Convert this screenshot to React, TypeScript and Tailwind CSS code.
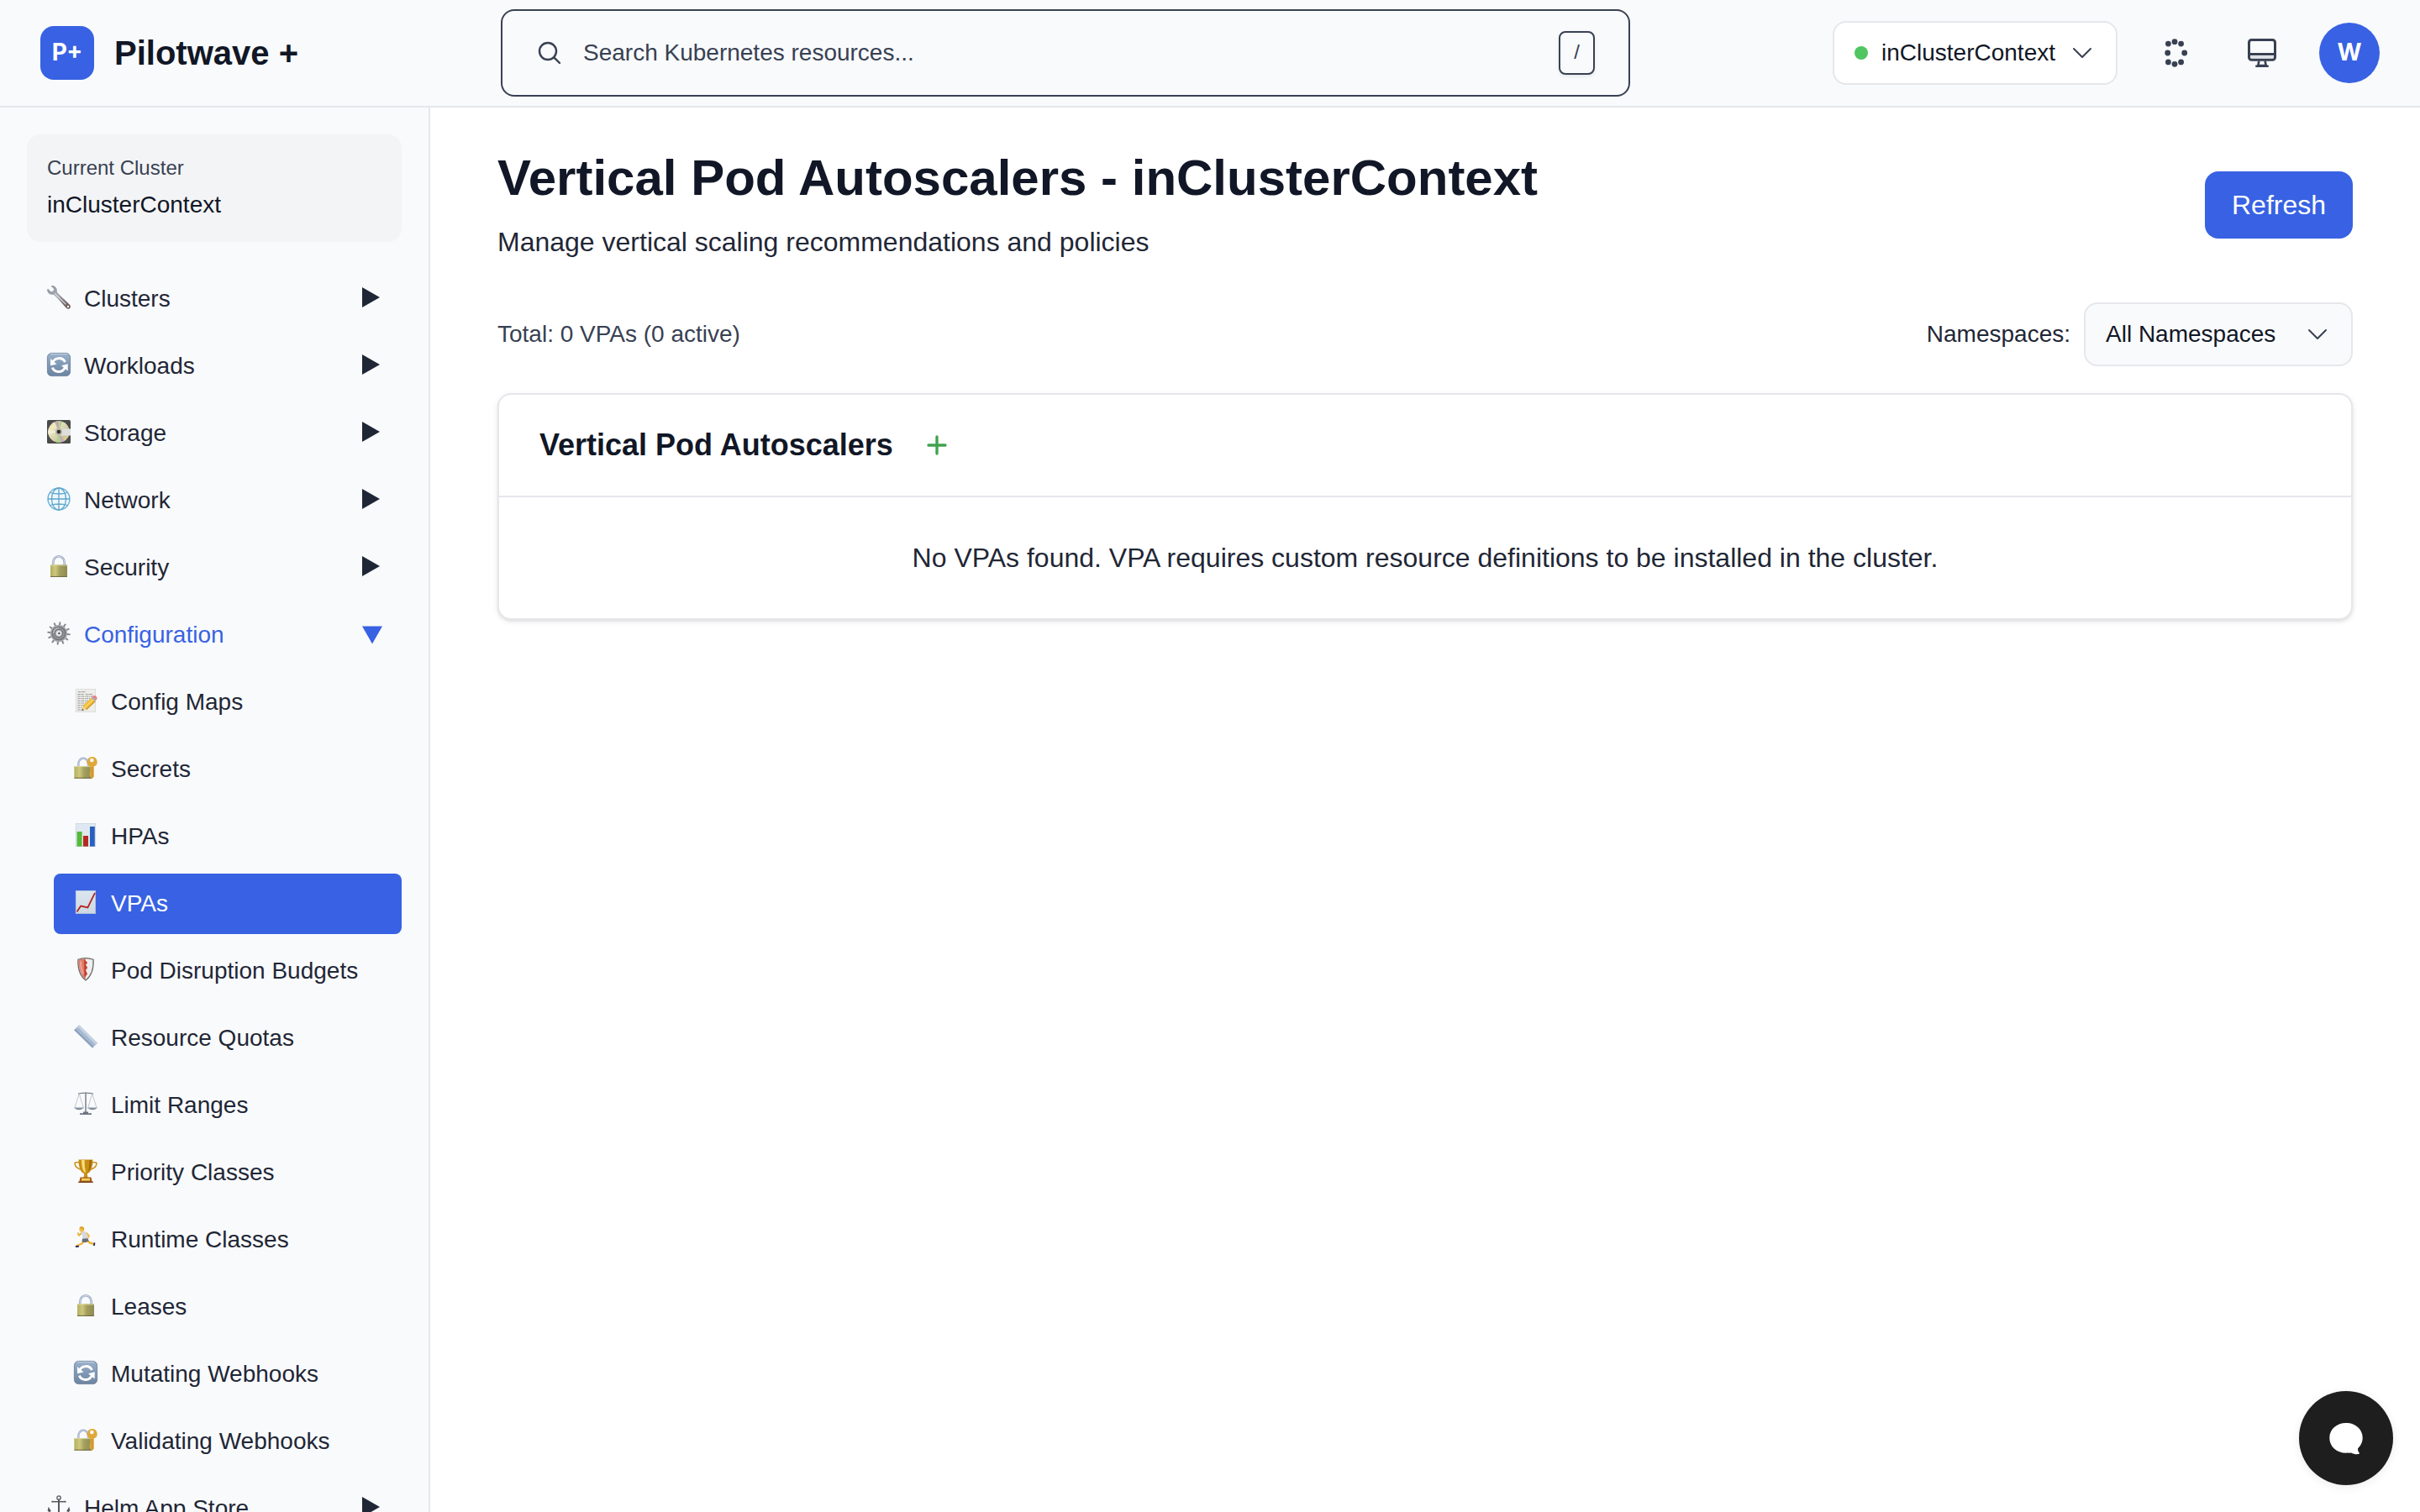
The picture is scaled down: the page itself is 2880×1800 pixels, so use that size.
import type { ReactNode } from "react";

const Svg = ({ children }: { children: ReactNode }) => (
  <svg viewBox="0 0 28 28" className="-mt-1 size-7 shrink-0 overflow-visible">
    {children}
  </svg>
);

const Wrench = () => (
  <Svg>
    <defs>
      <linearGradient id="wr" x1="0" y1="0" x2="1" y2="1">
        <stop offset="0" stopColor="#8f959e" />
        <stop offset=".45" stopColor="#a4a9b2" />
        <stop offset=".75" stopColor="#75696a" />
        <stop offset="1" stopColor="#6f5a55" />
      </linearGradient>
    </defs>
    <path
      d="M4.600.600 5.500 0c3-.2 6 1.900 6.300 5.200.1 1-.1 1.900.2 2.700l4.400 4.600 10.300 9.900c1.400 1.300 1.700 3.200.5 4.500-1.300 1.300-3.300 1-4.500-.5L13 15.800l-4.600-4.600c-.9-.5-2-.2-3.200-.4C2 10.300-.1 7.600.2 4.500l1-.8 3.400 3.500 2.800-.6.700-2.700z"
      fill="url(#wr)"
    />
    <path d="m9 9.200 13.500 13.200" stroke="#d6d9df" strokeWidth="1.300" />
    <circle cx="25" cy="25" r="1.200" fill="#f3f3f3" />
  </Svg>
);

const Cycle = ({ id }: { id: string }) => (
  <Svg>
    <defs>
      <linearGradient id={id} x1="0" y1="0" x2="0" y2="1">
        <stop offset="0" stopColor="#9db3cc" />
        <stop offset=".5" stopColor="#7f98b5" />
        <stop offset="1" stopColor="#6d85a1" />
      </linearGradient>
    </defs>
    <rect x=".4" y=".4" width="27.200" height="27.200" rx="5" fill={`url(#${id})`} stroke="#647b96" strokeWidth=".8" />
    <path d="M4 1.500h20" stroke="#c3d2e3" strokeWidth="1" />
    <g fill="none" stroke="#fff" strokeWidth="2.900">
      <path d="M6.500 12a8.200 8.200 0 0 1 15-1" />
      <path d="M21.500 17a8.200 8.200 0 0 1-15.200.6" />
    </g>
    <path d="M4 7v8.200l7.500-1.700z" fill="#fff" />
    <path d="M24.700 21.500v-8.200L17 15.200z" fill="#fff" />
  </Svg>
);

const Disc = () => (
  <Svg>
    <defs>
      <linearGradient id="dsc" x1="0" y1="0" x2="1" y2="1">
        <stop offset="0" stopColor="#d8cc98" />
        <stop offset=".25" stopColor="#f0ebbf" />
        <stop offset=".5" stopColor="#d9d6b4" />
        <stop offset=".75" stopColor="#cfc38d" />
        <stop offset="1" stopColor="#efe9b8" />
      </linearGradient>
    </defs>
    <rect width="28" height="28" rx="1.500" fill="#4a4a4a" />
    <circle cx="14" cy="14" r="12.800" fill="url(#dsc)" />
    <path d="M14 14 9 2.300A12.800 12.800 0 0 1 14 1.200z" fill="#c4a9b3" />
    <path d="M14 14 14.500 1.200a12.800 12.800 0 0 1 3.500.7z" fill="#a9d08c" />
    <path d="m14 14-3 12.400a12.800 12.800 0 0 0 4.500.3z" fill="#a8d48e" />
    <path d="m14 14 2 12.600a12.800 12.800 0 0 0 4.500-1.700z" fill="#c6a9b8" />
    <path d="M14 14 1.300 12a12.800 12.800 0 0 0 .3 5z" fill="#f3efd6" />
    <path d="M16 10.500h12v8H16z" fill="#dedede" />
    <circle cx="14" cy="14" r="4" fill="#b9b6a2" />
    <circle cx="14" cy="14" r="2.300" fill="#2e2e2e" />
  </Svg>
);

const Globe = () => (
  <Svg>
    <circle cx="14" cy="14" r="13" fill="#eef7fc" stroke="#6db2d6" strokeWidth="1.400" />
    <g fill="none" stroke="#5ea6cc" strokeWidth="1.300">
      <ellipse cx="14" cy="14" rx="8.500" ry="13" />
      <path d="M14 1v26M1 14h26M3.500 6.500q10.500 3 21 0M3.500 21.500q10.500-3 21 0" />
    </g>
  </Svg>
);

const lockDefs = (id: string) => (
  <defs>
    <linearGradient id={id} x1="0" y1="0" x2="1" y2="0">
      <stop offset="0" stopColor="#b3ae62" />
      <stop offset=".3" stopColor="#cdc87c" />
      <stop offset=".55" stopColor="#a49f5e" />
      <stop offset="1" stopColor="#8f8a53" />
    </linearGradient>
  </defs>
);

const Lock = ({ id }: { id: string }) => (
  <Svg>
    {lockDefs(id)}
    <path d="M7.300 14V9.500a6.700 7.200 0 0 1 13.400 0V14" fill="none" stroke="#9aa9c2" strokeWidth="2.600" />
    <path d="M7.300 13V9.500a6.700 7.200 0 0 1 13.400 0V13" fill="none" stroke="#d3ddeb" strokeWidth="1" />
    <rect x="4" y="12.300" width="20" height="14.700" rx=".8" fill={`url(#${id})`} />
    <path d="M4 13h20" stroke="#dcd9a0" strokeWidth=".9" />
    <path d="M4 26.400h20" stroke="#6d6940" strokeWidth="1" />
  </Svg>
);

const LockKey = ({ id }: { id: string }) => (
  <Svg>
    {lockDefs(id)}
    <path d="M5.300 13V9.500a5.800 6.800 0 0 1 11.600 0V13" fill="none" stroke="#9aa9c2" strokeWidth="2.300" />
    <path d="M5.300 13V9.500a5.800 6.800 0 0 1 11.600 0V13" fill="none" stroke="#d3ddeb" strokeWidth=".8" />
    <rect x=".4" y="12" width="21.400" height="14.800" rx=".8" fill={`url(#${id})`} />
    <path d="M.6 12.600h21" stroke="#dcd9a0" strokeWidth=".9" />
    <path d="M.5 26.200h21" stroke="#6d6940" strokeWidth="1" />
    <path
      fillRule="evenodd"
      d="M21.300 1a6 6 0 0 1 2.500 11.600V25l-2.300 2-2-2v-1.600l-1.200-1 1.200-1.200-1.200-1.400 1.200-1.400v-5.800A6 6 0 0 1 21.300 1zm0 1.700a2.300 2.300 0 1 0 0 4.600 2.300 2.300 0 0 0 0-4.600z"
      fill="#dfa93a"
    />
    <path d="M21.800 13v12" stroke="#b98221" strokeWidth=".9" />
  </Svg>
);

const Gear = () => (
  <Svg>
    <g stroke="#85888c" strokeWidth="2" strokeLinecap="round">
      {[0, 30, 60, 90, 120, 150].map((a) => (
        <path key={a} d="M14 1.200v25.600" transform={`rotate(${a + 6} 14 14)`} />
      ))}
    </g>
    <circle cx="14" cy="14" r="10.200" fill="#a9acb0" />
    <circle cx="14" cy="14" r="8" fill="#8b8e92" stroke="#6c6f73" strokeWidth="1.200" />
    <path d="M7.500 14a6.500 6.500 0 0 1 6.500-6.500" fill="none" stroke="#c2c5c8" strokeWidth="1.200" />
    <circle cx="14" cy="14" r="4.500" fill="#c3c6c9" stroke="#6c6f73" />
    <circle cx="14" cy="14" r="2.700" fill="#eeeff0" />
    <circle cx="14.300" cy="14" r="1.200" fill="#4d4f52" />
  </Svg>
);

const Memo = () => (
  <Svg>
    <rect x="2.200" y=".3" width="23.500" height="27.400" fill="#ededea" stroke="#d2d2cf" strokeWidth=".6" />
    <g stroke="#8f8f8f" strokeWidth="1" strokeDasharray="2.500 .8 1.200 .6">
      <path d="M5 3.700h9M4.500 6.500h7M14 6.500h8M4.500 9h18M4.500 11.700h15M4.500 14.400h12M4.500 17h10M4.500 19.700h8M4.500 22.300h7M4.500 25h5" />
    </g>
    <path d="m9.500 25.800 1.300-5.800L21.500 10l4.200 4.400L15 24.600z" fill="#f0bc35" />
    <path d="m12.800 22 11-10" stroke="#f9db74" strokeWidth="1.300" />
    <path d="m14.600 24.900 10.800-10.200" stroke="#c98a1d" strokeWidth="1.100" />
    <path d="m9.500 25.800 1.300-5.500 4 4.200z" fill="#ecd2a0" />
    <path d="m9.500 26 .5-2.200 1.600 1.600z" fill="#333" />
    <path d="m20.500 10.700 1.500-1.500 4.300 4.400-1.500 1.500z" fill="#a9b0ba" />
    <path d="M21.700 9.400c1.600-1.800 3.400-1.800 4.800-.5s1.400 3 .1 4.500z" fill="#e5808a" />
  </Svg>
);

const Bars = () => (
  <Svg>
    <rect x="2.200" y=".3" width="23.500" height="27.400" fill="#dfe8f0" stroke="#c3cdd7" strokeWidth=".6" />
    <rect x="3.600" y="10" width="6" height="17.700" fill="#55b938" />
    <rect x="11" y="15" width="6" height="12.700" fill="#b52a20" />
    <rect x="19" y="4" width="5.800" height="23.700" fill="#2860c0" />
  </Svg>
);

const Trend = () => (
  <Svg>
    <defs>
      <linearGradient id="tr" x1="0" y1="0" x2="0" y2="1">
        <stop offset="0" stopColor="#dce6ef" />
        <stop offset="1" stopColor="#ced8e2" />
      </linearGradient>
    </defs>
    <rect x="2.200" y=".3" width="23.500" height="27.400" fill="url(#tr)" stroke="#b9c6d8" strokeWidth=".6" />
    <path d="m3.500 25.500 4.700-7 8.200 1.900L25 2.800" fill="none" stroke="#b3261f" strokeWidth="1.800" />
  </Svg>
);

const Shield = () => (
  <Svg>
    <path d="M4.900 2.200Q14-1 23.100 2.200q.9 17-9.100 24.900Q4 19.200 4.900 2.200z" fill="#eceef0" stroke="#6a6460" strokeWidth="1.200" />
    <path d="M5.600 2.800Q9.800 1.200 14 1.200V26Q5 18.400 5.600 2.800z" fill="#df7c6b" />
    <path d="m12 2 4.200 4-2.200 2.500 2.200 3.500-2.200 3 2 4.500L12.500 24z" fill="#c4402f" />
    <path d="M8 4.500q-.1 9 3.200 15" stroke="#efa193" strokeWidth="2" fill="none" />
  </Svg>
);

const Ruler = () => (
  <Svg>
    <path d="M.2 6.300 6.200.2 28 21.800l-6 5.600z" fill="#a9bbd2" />
    <path d="M6.200.2 28 21.800l-2 1.900L4.200 2.300z" fill="#c4d1e1" />
    <path d="M.2 6.300 22 27.400l1.500-1.400L1.700 4.700z" fill="#8ba0bc" />
    <path d="m3.300 3.200 21.500 21.400" stroke="#93a7c1" strokeWidth=".8" strokeDasharray="1 1" />
  </Svg>
);

const Scales = () => (
  <Svg>
    <g fill="none" strokeLinecap="round">
      <path d="M5.500 1.800q8.500-1.500 17 0" stroke="#7b828d" strokeWidth="1.300" />
      <path d="M14 1v23" stroke="#8f99a8" strokeWidth="1.900" />
      <path d="M6.300 2 .9 19M6.300 2l5 17M21.700 2l-5 17M21.700 2l5.400 17" stroke="#b5b9c0" strokeWidth=".8" />
    </g>
    <path d="M.3 18.300h11.400q-1.500 3-5.700 3t-5.700-3zM16.300 18.300h11.400q-1.500 3-5.700 3t-5.700-3z" fill="#7c8796" />
    <path d="M1 18.700h10M17 18.700h10" stroke="#d3d9e2" strokeWidth=".8" />
    <path d="M11 23.600h6v1.600h4v1.900H7v-1.900h4z" fill="#6c7480" />
  </Svg>
);

const Trophy = () => (
  <Svg>
    <path d="M7 3.700H2.700Q.2 3.500 1.500 7c1.200 3.600 4 4.500 7 5.400M21 3.700h4.300q2.500-.2 1.200 3.300c-1.200 3.600-4 4.500-7 5.400" fill="none" stroke="#c9971f" strokeWidth="1.600" />
    <path d="M5.500.5h17q.3 13-6 16.500h-5Q5.200 13.500 5.500.5z" fill="#c68d17" />
    <path d="M9 1q0 10 3.300 14.500h1.800Q12.300 9 12.700 1z" fill="#f8dc72" />
    <path d="M18.500 1q.3 9-2 14 4.200-4 4.400-14z" fill="#9a640c" />
    <path d="M12.300 16.500h3.400l.8 5.500h-5z" fill="#c88f1b" />
    <path d="M7.500 21.600h13l1.300 6H6.200z" fill="#a65f1b" />
    <path d="M9 22.800h10v2.800H9z" fill="#f3ce5c" />
    <path d="M5.200 26.600h17.600V28H5.200z" fill="#7d3d16" />
  </Svg>
);

const Runner = () => (
  <Svg>
    <g fill="none" strokeLinecap="round" strokeLinejoin="round">
      <path d="m10 6.800-4 4-1.200-2.600" stroke="#eeb334" strokeWidth="2" />
      <path d="m15 8 3 3.500-2 3" stroke="#f1bb40" strokeWidth="2" />
      <path d="M12.500 16.500 9.500 20.500l-6 2.500" stroke="#efb539" strokeWidth="2.400" />
      <path d="m15.500 16.500 3.300 3 5 1.500" stroke="#efb539" strokeWidth="2.400" />
      <path d="m2.600 24 2.600-.2M24 22.300l.4-2.200" stroke="#2b2f63" strokeWidth="1.900" />
    </g>
    <path d="m8 6.200 5.500-.4 2.700 4.700.3 4.500-6.500.9.300-4z" fill="#d5d8de" />
    <path d="m10 14.800 6.500-.6 1.200 3.400-4 1.700-4.200-.9z" fill="#6b6d74" />
    <circle cx="9.200" cy="3.500" r="2.900" fill="#f3bf48" />
    <path d="M6.600 2.300Q6.500.2 9.300.2t2.900 3.500L11 4.400l-.7-1.900z" fill="#d99b27" />
  </Svg>
);

const Anchor = () => (
  <Svg>
    <g fill="none" stroke="#55595f">
      <circle cx="14" cy="3" r="2.200" strokeWidth="1.300" />
      <path d="M14 5.200v21" strokeWidth="2" />
      <path d="M6 7.700h16" strokeWidth="1.500" />
      <path d="M2 17q1.500 8.700 12 9.600Q24.500 25.700 26 17" strokeWidth="1.700" />
    </g>
    <path d="m1.700 13.700 3.300 5.500-4.400-.4zM26.300 13.700 23 19.200l4.400-.4zM5 7.700l1.500-1.400v2.800zM23 7.700l-1.500-1.400v2.800z" fill="#55595f" />
  </Svg>
);

const Chevron = () => (
  <svg viewBox="0 0 24 24" className="size-8 shrink-0" fill="none" stroke="#384152" strokeWidth="1.500" strokeLinecap="round" strokeLinejoin="round">
    <path d="m19.500 8.250-7.500 7.500-7.500-7.500" />
  </svg>
);

const Group = ({ icon, label, open }: { icon: ReactNode; label: string; open?: boolean }) => (
  <a className={`flex h-18 items-center gap-4 pl-6 pr-[23px] ${open ? "text-[#3862e3]" : "text-[#1f2736]"}`}>
    {icon}
    <span className="flex-1">{label}</span>
    {open ? (
      <svg viewBox="0 0 24 24" className="size-6" fill="currentColor">
        <path d="M0 1.600h24L12 22.400z" />
      </svg>
    ) : (
      <svg viewBox="0 0 24 24" className="-mt-1 size-6" fill="currentColor">
        <path d="M0 0v24l21-12z" />
      </svg>
    )}
  </a>
);

const Item = ({ icon, label, active }: { icon: ReactNode; label: string; active?: boolean }) => (
  <a className={`ml-8 flex h-18 items-center gap-4 rounded-lg pl-6 ${active ? "bg-[#3862e3] text-white" : "text-[#1f2736]"}`}>
    {icon}
    <span>{label}</span>
  </a>
);

function Header() {
  return (
    <header className="flex h-32 shrink-0 items-center border-b-2 border-[#e5e7eb] bg-[#f9fafc] px-12">
      <div className="flex w-[548px] items-center gap-6">
        <div className="flex size-16 items-center justify-center rounded-2xl bg-[#3862e3] pb-[3px] font-['Inter',sans-serif] text-[28px] font-bold text-white">
          P+
        </div>
        <span className="text-[40px] font-bold leading-none text-[#111726]">Pilotwave +</span>
      </div>
      <div className="flex h-[104px] w-[1344px] items-center rounded-2xl border-2 border-[#384152] pl-10 pr-10">
        <svg viewBox="0 0 24 24" className="size-8" fill="none" stroke="#384152" strokeWidth="1.800" strokeLinecap="round" strokeLinejoin="round">
          <path d="m21 21-5.197-5.197m0 0A7.500 7.500 0 1 0 5.196 5.196a7.500 7.500 0 0 0 10.607 10.607Z" />
        </svg>
        <span className="ml-6 flex-1 text-[#384152]">Search Kubernetes resources...</span>
        <kbd className="flex h-[52px] w-[43px] items-center justify-center rounded-lg border-2 border-[#384152] bg-[#f9fafc] pb-0.5 font-['Liberation_Sans',Arial,sans-serif] text-2xl leading-none text-[#384152] shadow-[0_2px_4px_rgba(0,0,0,0.08)]">
          /
        </kbd>
      </div>
      <div className="ml-auto flex items-center">
        <button className="flex h-[76px] items-center rounded-2xl border-2 border-[#e5e7eb] bg-white px-6">
          <span className="size-4 rounded-full bg-[#51c561]" />
          <span className="ml-4 mr-4 text-[#111726]">inClusterContext</span>
          <Chevron />
        </button>
        <svg viewBox="0 0 36 36" className="ml-[50px] size-9" fill="#384152">
          <circle cx="18" cy="4.700" r="3.400" />
          <circle cx="10.400" cy="7.100" r="3.400" />
          <circle cx="25.600" cy="7.100" r="3.400" />
          <circle cx="9.700" cy="18" r="3.400" />
          <circle cx="29.700" cy="18" r="3.400" />
          <circle cx="10.400" cy="28.900" r="3.400" />
          <circle cx="25.600" cy="28.900" r="3.400" />
          <circle cx="18" cy="31.300" r="3.400" />
        </svg>
        <svg viewBox="0 0 36 36" className="ml-[68px] size-9" fill="none" stroke="#384152" strokeWidth="3" strokeLinejoin="round">
          <rect x="2.500" y="2.500" width="31" height="23.700" rx="3" />
          <path d="M2.500 19.500h31" />
          <path d="M4 22.800h28" strokeWidth="1" strokeOpacity=".3" />
          <path d="M14.400 27.500 13.300 33h9.400l-1.100-5.500" strokeWidth="2.600" />
          <path d="M11.200 33.700h13.600" strokeLinecap="round" strokeWidth="2.400" />
        </svg>
        <div className="ml-[50px] flex size-18 items-center justify-center rounded-full bg-[#3862e3] pb-[3px] font-['Inter',sans-serif] text-[28px] font-bold text-white">
          W
        </div>
      </div>
    </header>
  );
}

function Sidebar() {
  return (
    <aside className="flex w-[512px] shrink-0 flex-col gap-2 overflow-hidden border-r-2 border-[#e5e7eb] bg-[#f9fafc] px-8 pt-8">
      <div className="mb-6 h-32 shrink-0 rounded-2xl bg-[#f3f4f6] px-6 pt-6">
        <div className="text-2xl leading-8 text-[#384152]">Current Cluster</div>
        <div className="mt-2 leading-10 text-[#111726]">inClusterContext</div>
      </div>
      <nav className="flex w-[446px] shrink-0 flex-col gap-2">
        <Group icon={<Wrench />} label="Clusters" />
        <Group icon={<Cycle id="cy1" />} label="Workloads" />
        <Group icon={<Disc />} label="Storage" />
        <Group icon={<Globe />} label="Network" />
        <Group icon={<Lock id="lk1" />} label="Security" />
        <Group icon={<Gear />} label="Configuration" open />
        <Item icon={<Memo />} label="Config Maps" />
        <Item icon={<LockKey id="lk2" />} label="Secrets" />
        <Item icon={<Bars />} label="HPAs" />
        <Item icon={<Trend />} label="VPAs" active />
        <Item icon={<Shield />} label="Pod Disruption Budgets" />
        <Item icon={<Ruler />} label="Resource Quotas" />
        <Item icon={<Scales />} label="Limit Ranges" />
        <Item icon={<Trophy />} label="Priority Classes" />
        <Item icon={<Runner />} label="Runtime Classes" />
        <Item icon={<Lock id="lk3" />} label="Leases" />
        <Item icon={<Cycle id="cy2" />} label="Mutating Webhooks" />
        <Item icon={<LockKey id="lk4" />} label="Validating Webhooks" />
        <Group icon={<Anchor />} label="Helm App Store" />
      </nav>
    </aside>
  );
}

function Main() {
  return (
    <main className="flex-1 bg-white px-20 pt-12">
      <div className="flex items-center justify-between">
        <div>
          <h1 className="text-[60px] font-bold leading-[72px] text-[#111726]">Vertical Pod Autoscalers - inClusterContext</h1>
          <p className="mt-4 text-[32px] leading-[48px] text-[#1f2736]">Manage vertical scaling recommendations and policies</p>
        </div>
        <button className="h-20 w-44 rounded-2xl bg-[#3862e3] text-[32px] text-white">Refresh</button>
      </div>
      <div className="mt-12 flex items-center justify-between">
        <span className="text-[#384152]">Total: 0 VPAs (0 active)</span>
        <div className="flex items-center gap-4">
          <span className="text-[#1f2736]">Namespaces:</span>
          <button className="flex h-[76px] w-[320px] items-center justify-between rounded-2xl border-2 border-[#e5e7eb] bg-[#f9fafc] px-6 text-[#111726]">
            <span>All Namespaces</span>
            <Chevron />
          </button>
        </div>
      </div>
      <section className="mt-8 overflow-hidden rounded-2xl border-2 border-[#e5e7eb] bg-white shadow-[0_2px_6px_rgba(0,0,0,0.1),0_2px_4px_-2px_rgba(0,0,0,0.1)]">
        <div className="flex h-[122px] items-center border-b-2 border-[#e5e7eb] px-12">
          <h2 className="text-4xl font-bold text-[#111726]">Vertical Pod Autoscalers</h2>
          <svg viewBox="0 0 24 24" className="ml-9 size-8" fill="none" stroke="#3fa34d" strokeWidth="2.500" strokeLinecap="round">
            <path d="M12 4.500v15m7.500-7.500h-15" />
          </svg>
        </div>
        <div className="flex h-36 items-center justify-center text-[32px] text-[#1f2736]">
          No VPAs found. VPA requires custom resource definitions to be installed in the cluster.
        </div>
      </section>
    </main>
  );
}

export default function App() {
  return (
    <div className="relative flex h-[1800px] w-[2880px] flex-col overflow-hidden bg-white font-['Liberation_Sans',Arial,sans-serif] text-[28px] leading-10">
      <Header />
      <div className="flex min-h-0 flex-1">
        <Sidebar />
        <Main />
      </div>
      <button className="absolute bottom-8 right-8 size-28 rounded-full bg-[#1e1e1e] shadow-[0_2px_12px_rgba(0,0,0,0.08)]">
        <svg viewBox="0 0 112 112" className="size-28" fill="#fff">
          <path d="M56 38c11 0 19.700 7.600 19.700 17.500 0 5.500-2.200 9.300-5.700 13 0 2.600.6 3.500 1.700 5 .4.900-.1 1.500-1 1.600-3.400.3-6.200-.4-8.700-1.700-2 .2-4 .3-6 .3-11.500 0-19.700-7.800-19.700-18S45 38 56 38z" />
        </svg>
      </button>
    </div>
  );
}
